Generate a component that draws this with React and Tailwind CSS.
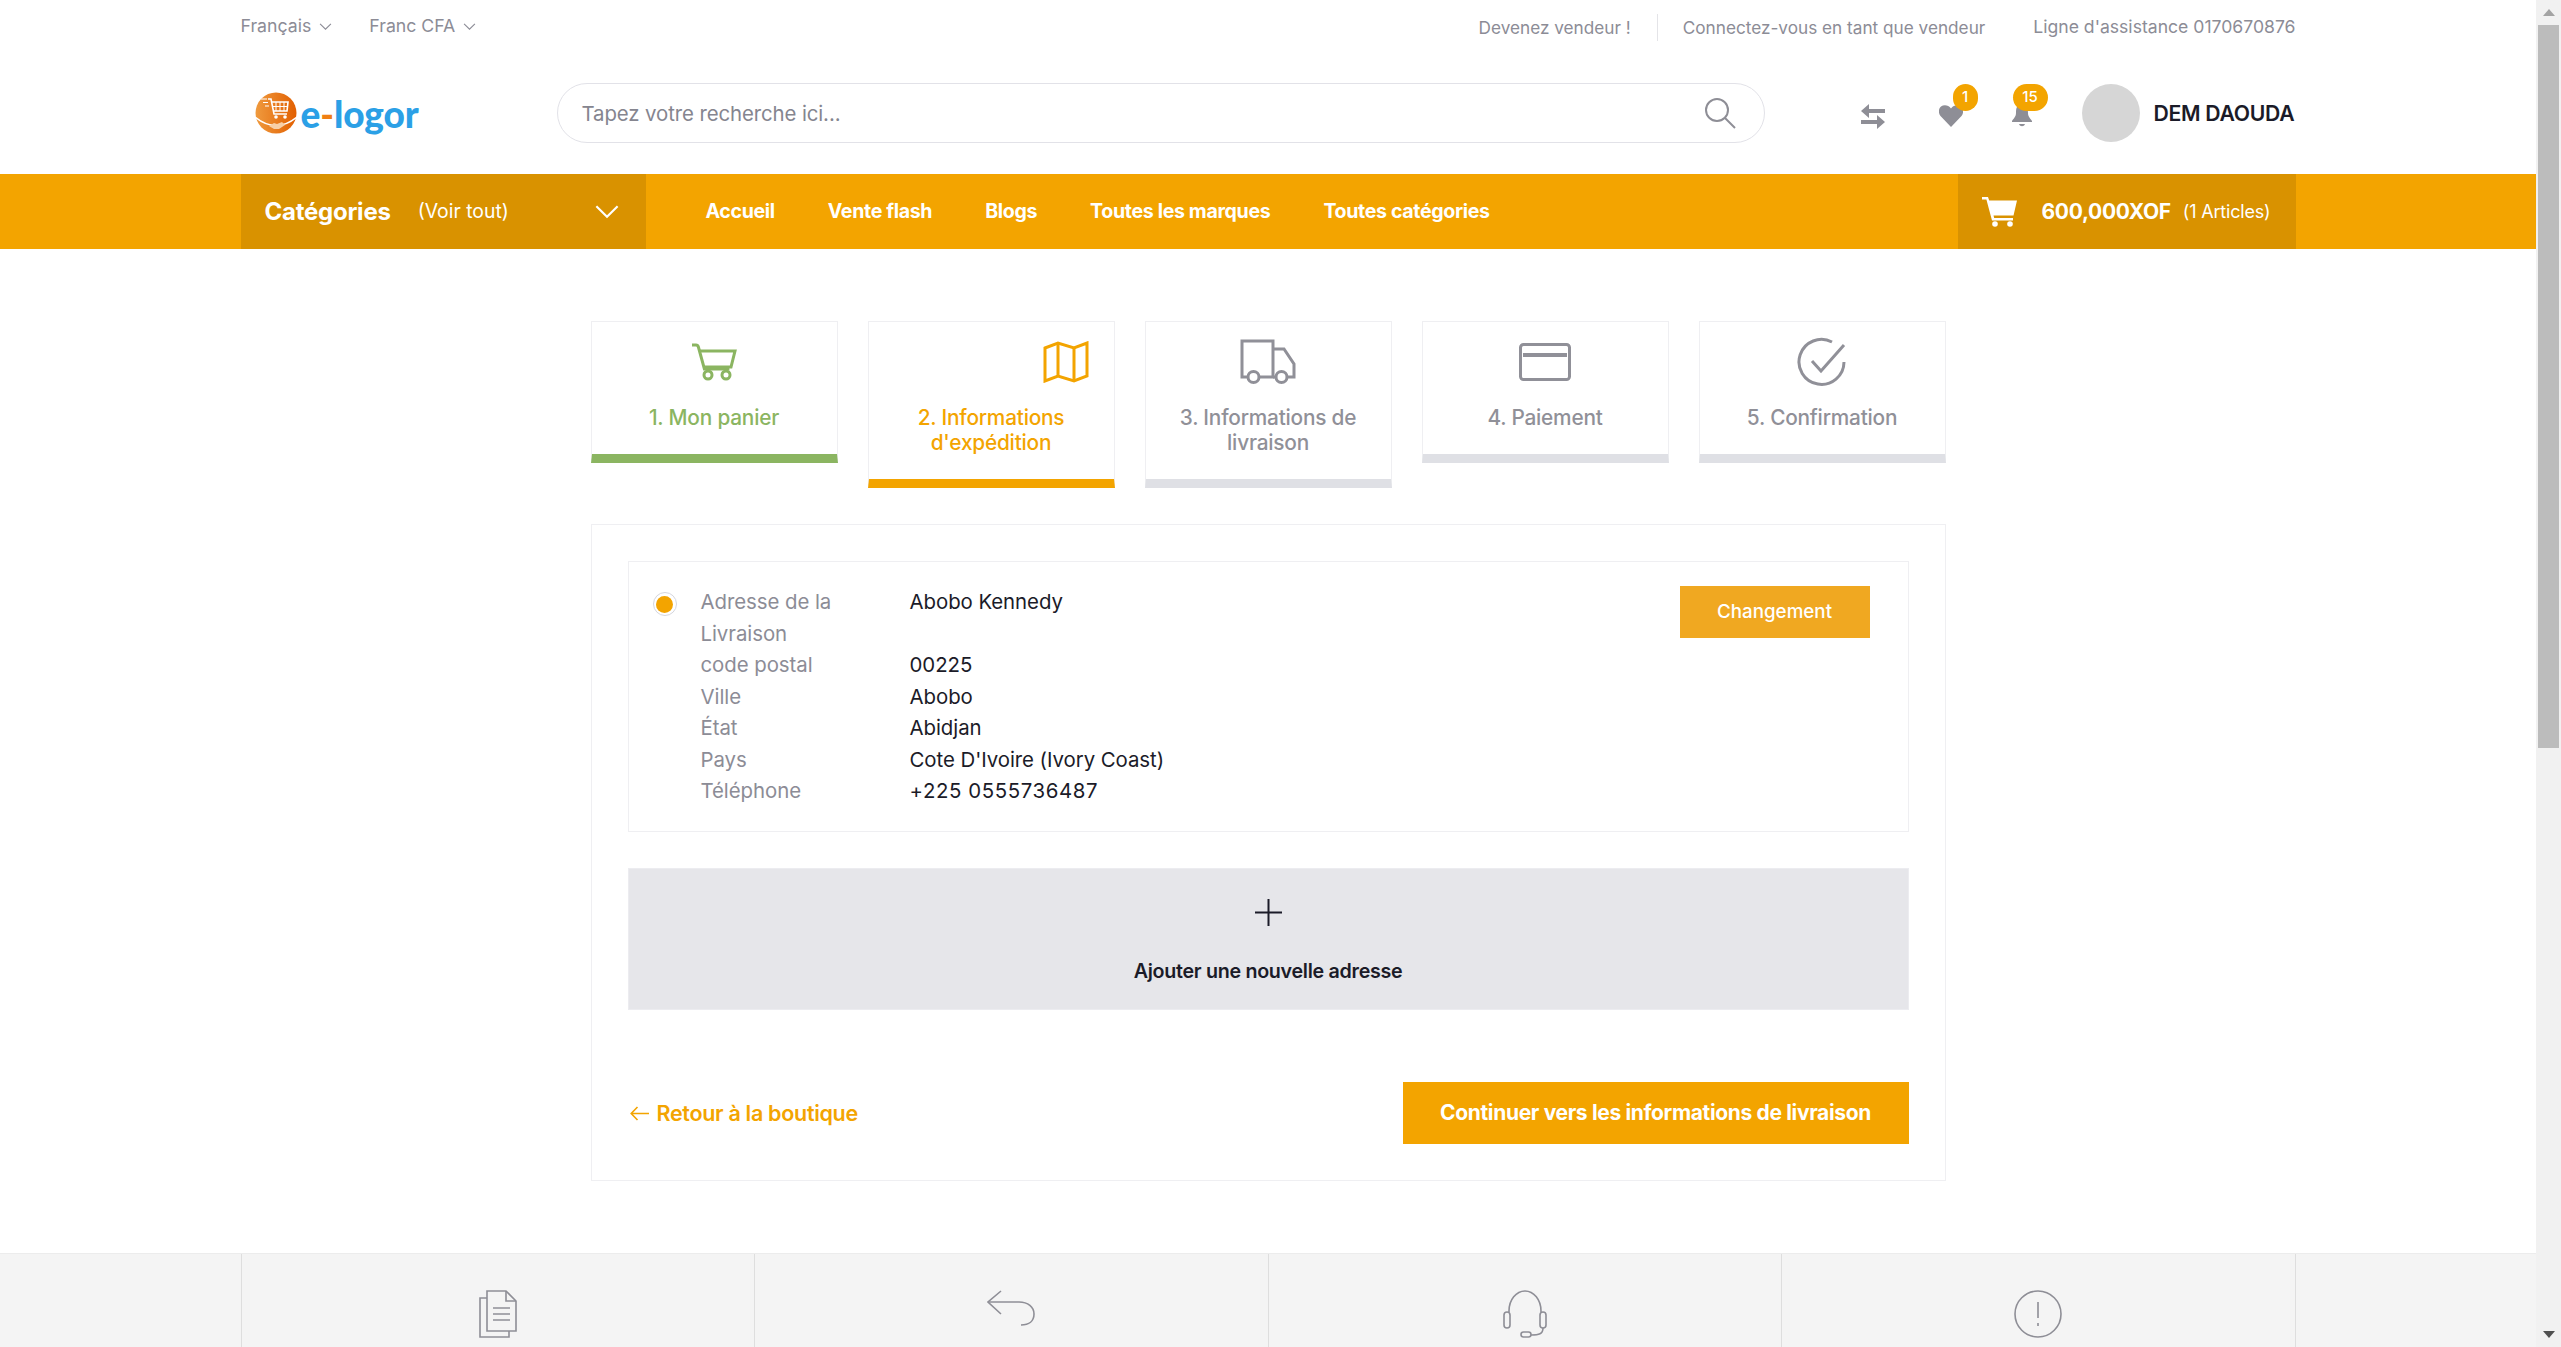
import React from "react";

function Chevron({ className }) {
  return (
    <svg className={className} viewBox="0 0 12 8" fill="none" stroke="currentColor" strokeWidth="1">
      <path d="M1 1.5 6 6.5 11 1.5" />
    </svg>
  );
}

function Logo() {
  return (
    <div className="flex items-center gap-[4px] h-[42px]">
      <svg width="42" height="42" viewBox="0 0 42 42">
        <defs>
          <linearGradient id="lg" x1="0" x2="1" y1="0" y2="0">
            <stop offset="0" stopColor="#ef9a3e" />
            <stop offset="1" stopColor="#e25f00" />
          </linearGradient>
        </defs>
        <circle cx="21" cy="21" r="20.5" fill="url(#lg)" />
        <path d="M0 25 Q21 42 42 25" fill="none" stroke="#fff" strokeWidth="1.6" />
        <g fill="none" stroke="#fff" strokeWidth="1.6">
          <path d="M13 7h3l3 15h13" />
          <path d="M16.5 10H33l-1 9H18" />
          <path d="M21 10v9M25 10v9M29 10v9M17.5 14.5h15" strokeWidth="1" />
          <path d="M6 7h6M8 10.5h5M10 14h4" strokeWidth="1.2" />
        </g>
        <circle cx="21" cy="25" r="1.8" fill="#fff" />
        <circle cx="30" cy="25" r="1.8" fill="#fff" />
        <path d="M14 34l5-3 3 1 5-2 3 3-6 4h-5z" fill="#f8cfa6" />
      </svg>
      <span className="font-['Lato',sans-serif] font-black text-[37px] leading-none tracking-[-0.1px] text-[#2ba0e6]">
        e<span className="text-[#f07f13]">-</span>logor
      </span>
    </div>
  );
}

function CartSolid() {
  return (
    <svg width="36" height="31" viewBox="0 0 36 31" fill="#fff">
      <path d="M0 1h6l1.2 3.5H35l-3.5 15H11.5l.7 2.5H31v2.6H10L4.4 3.6H0z" />
      <circle cx="13" cy="28" r="2.8" />
      <circle cx="28" cy="28" r="2.8" />
    </svg>
  );
}

const Steps = [
  {
    label: ["1. Mon panier"],
    text: "text-[#8bb561]",
    bar: "border-b-[#8bb561]",
    row: "justify-center",
    icon: (
      <svg width="46" height="40" viewBox="0 0 46 40" fill="none" stroke="currentColor" strokeWidth="3">
        <path d="M1 3h4c1.5 0 2 .6 2.4 2l6 22h25" />
        <path d="M9 9h35l-4 16H13" />
        <circle cx="17" cy="33" r="4" />
        <circle cx="35" cy="33" r="4" />
      </svg>
    ),
  },
  {
    label: ["2. Informations", "d'expédition"],
    text: "text-[#f3a400]",
    bar: "border-b-[#f3a400]",
    row: "justify-end pr-[25px]",
    icon: (
      <svg width="46" height="42" viewBox="0 0 46 42" fill="none" stroke="currentColor" strokeWidth="3">
        <path d="M2 7 15 2 31 7 44 2V35L31 40 15 35 2 40Z" />
        <path d="M15 2V35M31 7V40" />
      </svg>
    ),
  },
  {
    label: ["3. Informations de", "livraison"],
    text: "text-[#909098]",
    bar: "border-b-[#dfe0e5]",
    row: "justify-center",
    icon: (
      <svg width="56" height="46" viewBox="0 0 56 46" fill="none" stroke="currentColor" strokeWidth="3">
        <path d="M8 38H2V2H33V38H19" />
        <path d="M33 10H44L54 25V38H47M33 38H36" />
        <circle cx="13.5" cy="38" r="5.5" />
        <circle cx="41.5" cy="38" r="5.5" />
      </svg>
    ),
  },
  {
    label: ["4. Paiement"],
    text: "text-[#909098]",
    bar: "border-b-[#dfe0e5]",
    row: "justify-center",
    icon: (
      <svg width="52" height="38" viewBox="0 0 52 38" fill="none" stroke="currentColor" strokeWidth="3">
        <rect x="1.5" y="1.5" width="49" height="35" rx="3" />
        <path d="M4 12H48" strokeWidth="4" />
      </svg>
    ),
  },
  {
    label: ["5. Confirmation"],
    text: "text-[#909098]",
    bar: "border-b-[#dfe0e5]",
    row: "justify-center",
    icon: (
      <svg width="50" height="50" viewBox="0 0 50 50" fill="none" stroke="currentColor" strokeWidth="3">
        <path d="M47 25A22.5 22.5 0 1 1 35 5" />
        <path d="M15 24 24 34 47 8" />
      </svg>
    ),
  },
];

function Step({ s }) {
  return (
    <div className={`w-[247px] border border-[#efeff2] border-b-[9px] ${s.bar} pt-[15px] pb-[24px] text-center ${s.text}`}>
      <div className={`h-[50px] flex items-center ${s.row}`}>{s.icon}</div>
      <div className="mt-[18px] text-[20.8px] font-medium leading-[25px] tracking-[-0.2px]">
        {s.label.map((l) => (
          <div key={l}>{l}</div>
        ))}
      </div>
    </div>
  );
}

const Rows = [
  ["Adresse de la Livraison", "Abobo Kennedy", ""],
  ["code postal", "00225", ""],
  ["Ville", "Abobo", ""],
  ["État", "Abidjan", ""],
  ["Pays", "Cote D'Ivoire (Ivory Coast)", ""],
  ["Téléphone", "+225 0555736487", "tracking-[0.6px]"],
];

const FooterIcons = [
  <svg key="a" width="40" height="48" viewBox="0 0 40 48" fill="none" stroke="#8e8e96" strokeWidth="1.6">
    <path d="M9 1H28L38 11V41H9Z" />
    <path d="M28 1V11H38" />
    <path d="M9 8H2V47H31V41" />
    <path d="M15 18H32M15 24H32M15 30H32" />
  </svg>,
  <svg key="b" width="48" height="36" viewBox="0 0 48 36" fill="none" stroke="#8e8e96" strokeWidth="1.6">
    <path d="M14 1 1 12 14 24" />
    <path d="M1 12H32C41 12 47 17 47 24S42 35 34 35" />
  </svg>,
  <svg key="c" width="44" height="48" viewBox="0 0 44 48" fill="none" stroke="#8e8e96" strokeWidth="1.6">
    <path d="M6 22V21A16 20 0 0 1 38 21V22" />
    <rect x="1" y="22" width="6" height="16" rx="3" />
    <rect x="37" y="22" width="6" height="16" rx="3" />
    <path d="M40 38C40 44 36 45 28 45" />
    <rect x="18" y="42" width="10" height="5" rx="2.5" />
  </svg>,
  <svg key="d" width="48" height="48" viewBox="0 0 48 48" fill="none" stroke="#8e8e96" strokeWidth="1.6">
    <circle cx="24" cy="24" r="23" />
    <path d="M24 12V28M24 33V36" />
  </svg>,
];

export default function App() {
  return (
    <div className="h-[1347px] w-full overflow-hidden flex bg-white font-['Inter','Noto_Sans',sans-serif] text-[#1b1b28]">
      <div className="w-[2536px] h-full flex flex-col shrink-0">
        <div className="h-[55px] shrink-0">
          <div className="w-[2055px] mx-auto h-full flex justify-between items-start text-[#8c8c96] text-[17.2px]">
            <div className="flex gap-[37px] pt-[14px] items-start text-[17.7px]">
              <span className="h-[24px] leading-[24px] flex items-center gap-[8px]">Français <Chevron className="w-[13px] h-[9px]" /></span>
              <span className="h-[24px] leading-[24px] flex items-center gap-[8px]">Franc CFA <Chevron className="w-[13px] h-[9px]" /></span>
            </div>
            <div className="flex items-start pt-[14px]">
              <span className="leading-[28px] pr-[26px]">Devenez vendeur !</span>
              <span className="h-[27px] border-l border-[#e4e4e8] pl-[25px] leading-[28px]">Connectez-vous en tant que vendeur</span>
              <span className="ml-[48px] leading-[26px] text-[17.6px]">Ligne d'assistance 0170670876</span>
            </div>
          </div>
        </div>
        <div className="h-[119px] shrink-0">
          <div className="w-[2055px] mx-auto h-full flex items-center pb-[3px]">
            <div className="w-[316px] pl-[14px]"><Logo /></div>
            <div className="w-[1208px] h-[60px] rounded-[30px] border border-[#e2e2e8] flex items-center justify-between pl-[24px] pr-[28px]">
              <span className="mt-[2px] text-[20.4px] text-[#85858f] tracking-[-0.1px]">Tapez votre recherche ici...</span>
              <svg width="32" height="32" viewBox="0 0 32 32" fill="none" stroke="#8e8e96" strokeWidth="2">
                <circle cx="13" cy="13" r="11" />
                <path d="M21 21 31 31" />
              </svg>
            </div>
            <div className="mt-[6px] ml-[96px] relative w-[24px] h-[25px]">
              <svg width="24" height="25" viewBox="0 0 24 25" fill="#8e8e96">
                <path d="M8 0v5h16v4H8v5L0 7zM16 11v5H0v4h16v5l8-7z" />
              </svg>
            </div>
            <div className="mt-[5px] ml-[54px] relative w-[24px] h-[22px]">
              <svg width="24" height="22" viewBox="0 0 24 22" fill="#8e8e96">
                <path d="M12 22 1.5 11C-1 8-.5 3.500 2 1.500 5-.5 9.500 0 12 3.500 14.500 0 19-.5 22 1.500 24.500 3.500 25 8 22.500 11z" />
              </svg>
              <span className="absolute left-[14px] top-[-21px] w-[25px] h-[27px] rounded-full bg-[#f3a400] text-white text-[15px] font-medium flex items-center justify-center">1</span>
            </div>
            <div className="mt-[5px] ml-[48px] relative w-[22px] h-[23px]">
              <svg width="22" height="23" viewBox="0 0 22 23" fill="#8e8e96">
                <path d="M11 0C6 0 5 4 5 9c0 4-3 6-4 8v1h20v-1c-1-2-4-4-4-8 0-5-1-9-6-9z" />
                <path d="M8 20h6c-1 3-5 3-6 0z" />
              </svg>
              <span className="absolute left-[2px] top-[-20px] w-[35px] h-[27px] rounded-full bg-[#f3a400] text-white text-[15px] font-medium flex items-center justify-center">15</span>
            </div>
            <div className="ml-[49px] w-[58px] h-[58px] rounded-full bg-[#d6d6d6] shrink-0" />
            <span className="mt-[2px] ml-[14px] text-[21.2px] font-semibold tracking-[-0.3px] whitespace-nowrap">DEM DAOUDA</span>
          </div>
        </div>
        <div className="h-[75px] shrink-0 bg-[#f3a400] text-white">
          <div className="w-[2055px] mx-auto h-full flex items-stretch justify-between">
            <div className="flex items-stretch">
              <div className="w-[405px] bg-[#d99200] flex items-center pl-[24px] pr-[26px]">
                <span className="text-[24px] font-bold tracking-[-0.25px]">Catégories</span>
                <span className="ml-[27px] text-[19.4px] mt-[1px]">(Voir tout)</span>
                <Chevron className="ml-auto w-[26px] h-[17px]" />
              </div>
              <nav className="ml-[60px] pt-[1px] flex items-center gap-[53px] text-[19.6px] font-bold tracking-[-0.35px]">
                <span>Accueil</span>
                <span>Vente flash</span>
                <span>Blogs</span>
                <span>Toutes les marques</span>
                <span>Toutes catégories</span>
              </nav>
            </div>
            <div className="w-[338px] bg-[#d99200] flex items-center pl-[24px]">
              <CartSolid />
              <span className="ml-[24px] text-[21px] font-bold tracking-[-0.3px]">600,000XOF</span>
              <span className="ml-[12px] text-[18px] tracking-[-0.2px]">(1 Articles)</span>
            </div>
          </div>
        </div>

        <div className="w-[1355px] mx-auto pt-[72px] shrink-0">
          <div className="flex items-start gap-[30px]">
            {Steps.map((s) => (
              <Step key={s.label[0]} s={s} />
            ))}
          </div>
          <div className="mt-[36px] h-[657px] border border-[#efeff2] p-[36px]">
            <div className="h-[271px] border border-[#efeff2] flex items-start pt-[24px] pl-[24px] pr-[38px]">
              <div className="mt-[6px] w-[24px] h-[24px] rounded-full border border-[#d5d6de] flex items-center justify-center shrink-0">
                <div className="w-[17px] h-[17px] rounded-full bg-[#f3a400]" />
              </div>
              <div className="ml-[24px] grid grid-cols-[209px_auto] text-[20.4px] leading-[31.5px] tracking-[-0.05px]">
                {Rows.map(([k, v, extra]) => (
                  <React.Fragment key={k}>
                    <div className="text-[#8c8c96] w-[150px]">{k}</div>
                    <div className={extra}>{v}</div>
                  </React.Fragment>
                ))}
              </div>
              <button className="ml-auto w-[190px] h-[52px] bg-[#f0a821] text-white text-[18.8px] font-medium">Changement</button>
            </div>
            <div className="mt-[36px] h-[142px] bg-[#e6e6ea] border border-[#ececf0] flex flex-col items-center">
              <svg className="mt-[30px]" width="27" height="27" viewBox="0 0 27 27" fill="none" stroke="#1b1b28" strokeWidth="2">
                <path d="M13.500 0V27M0 13.500H27" />
              </svg>
              <span className="mt-[31px] text-[19.7px] font-semibold tracking-[-0.3px]">Ajouter une nouvelle adresse</span>
            </div>
            <div className="mt-[72px] flex items-center justify-between">
              <span className="flex items-center gap-[8px] text-[#f3a400] text-[21.5px] font-semibold tracking-[-0.3px] pl-[2px]">
                <svg width="19" height="15" viewBox="0 0 19 15" fill="none" stroke="currentColor" strokeWidth="1.600">
                  <path d="M7.500 1 1.200 7.500 7.500 14M1.200 7.500H19" />
                </svg>
                Retour à la boutique
              </span>
              <button className="w-[506px] h-[62px] bg-[#f3a400] text-white text-[21px] font-bold tracking-[-0.35px]">Continuer vers les informations de livraison</button>
            </div>
          </div>
        </div>

        <div className="mt-[72px] flex-1 bg-[#f4f4f4] border-t border-[#ececec]">
          <div className="w-[2055px] mx-auto h-full grid grid-cols-4 border-r border-[#dedede]">
            {FooterIcons.map((icon, i) => (
              <div key={i} className="border-l border-[#dedede] flex justify-center pt-[36px]">
                {icon}
              </div>
            ))}
          </div>
        </div>
      </div>
      <div className="w-[25px] h-full bg-[#f1f1f1] flex flex-col items-center justify-between relative shrink-0">
        <div className="h-[25px] flex items-center justify-center w-full">
          <div className="w-0 h-0 border-l-[6px] border-r-[6px] border-b-[7px] border-l-transparent border-r-transparent border-b-[#a3a3a3]" />
        </div>
        <div className="absolute top-[25px] left-[2px] w-[21px] h-[723px] bg-[#bcbcbc]" />
        <div className="h-[25px] flex items-center justify-center w-full">
          <div className="w-0 h-0 border-l-[6px] border-r-[6px] border-t-[7px] border-l-transparent border-r-transparent border-t-[#505050]" />
        </div>
      </div>
    </div>
  );
}
